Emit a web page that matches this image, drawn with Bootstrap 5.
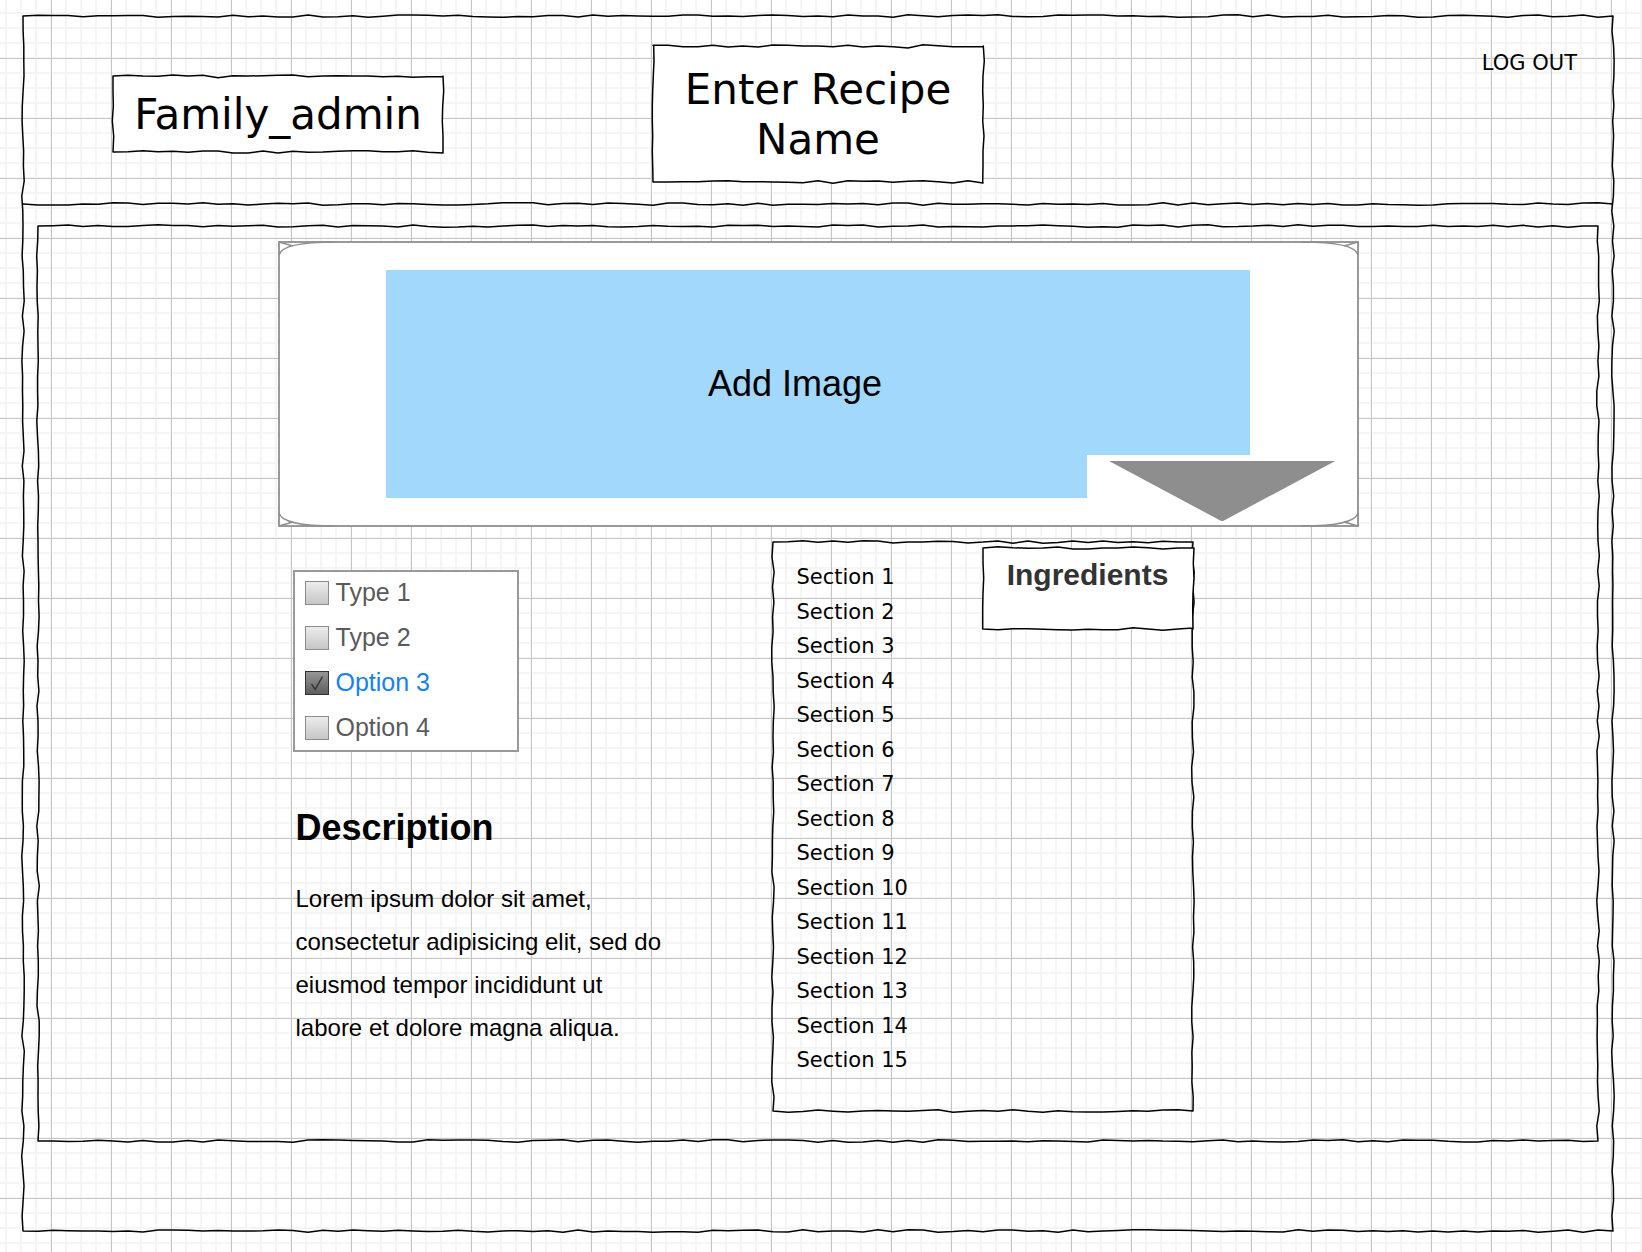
<!DOCTYPE html>
<html lang="en">
<head>
<meta charset="utf-8">
<meta name="viewport" content="width=device-width, initial-scale=1">
<title>Enter Recipe</title>
<link href="https://cdn.jsdelivr.net/npm/bootstrap@5.3.0/dist/css/bootstrap.min.css" rel="stylesheet">
<style>
  body {
    color: #000;
    font-family: Verdana, "DejaVu Sans", sans-serif;
    font-size: 21px;
    line-height: 25px;
    background-color: #fff;
    background-image:
      linear-gradient(90deg, #c6c6c6 1px, transparent 1px),
      linear-gradient(#c6c6c6 1px, transparent 1px),
      linear-gradient(90deg, #f5f5f5 2px, transparent 2px),
      linear-gradient(#f5f5f5 2px, transparent 2px);
    background-size: 60px 60px, 60px 60px, 15px 15px, 15px 15px;
    background-position: 51px 0, 0 58px, 5px 0, 0 12px;
  }
  .arial { font-family: Arial, "Liberation Sans", sans-serif; }
  .page-wrap { padding: 16px 29px 20px 23px; }

  /* hand-drawn outlines */
  .sketch { position: relative; isolation: isolate; }
  .sketch > .outline { position: absolute; inset: 0; width: 100%; height: 100%; overflow: visible; z-index: -1; pointer-events: none; }
  .outline path { fill: none; stroke: #000; stroke-width: 1.5; stroke-linejoin: round; }
  .filled > .outline path { fill: #fff; }

  .topbar { padding: 30px 0 22px; }
  .title-box { width: 330px; font-size: 42px; line-height: 50px; text-align: center; }
  .user-box { margin-left: 90px; padding: 14px 0 12px; }
  .recipe-box { padding: 19px 16px 17px; }
  .logout { margin-right: 36px; margin-top: 5px; }

  .page-frame { padding-bottom: 90px; }
  .content-frame { margin: 22px 15px 0; padding: 15px 15px 30px; }
  .content-col { max-width: 1081px; }

  .picture { height: 286px; padding: 29px 10%; background: #fff; }
  .corner { position: absolute; width: 64px; height: 14px; overflow: visible; }
  .corner path { fill: none; stroke: #8e8e8e; stroke-width: 1.5; }
  .picture-edge { position: absolute; inset: 0; border: 2px solid #999; pointer-events: none; }
  .corner.tr, .corner.br { right: 1px; }
  .corner.tl, .corner.bl { left: 1px; }
  .corner.tl, .corner.tr { top: 1px; }
  .corner.bl, .corner.br { bottom: 1px; }
  .corner.tr { transform: scaleX(-1); }
  .corner.bl { transform: scaleY(-1); }
  .corner.br { transform: scale(-1); }
  .add-image { background: #a2d8fc; font-size: 36px; line-height: 44px; padding: 0 46px 0 0; color: #000; }
  .dropper { position: absolute; right: 1px; bottom: 1px; width: 25%; height: 25%; background: #fff; padding: 6px 22px 5px; }
  .dropper svg { width: 100%; height: 100%; }

  .side-col { flex: 0 0 495px; padding: 43px 0 0 15px; }
  .types { width: 226px; height: 182px; background: #fff; border: 2px solid #999; padding: 0 10px; font-size: 25px; }
  .types .form-check { height: 45px; padding: 0 0 4px; margin: 0; gap: 7px; }
  .types .form-check-input {
    float: none; margin: 0; width: 24px; height: 24px; border: 1px solid #8c8c8c; border-radius: 0;
    background-image: linear-gradient(#ececec, #c6c6c6); background-size: 100% 100%; box-shadow: none;
  }
  .types .form-check-input:checked {
    border-color: #333;
    background-color: #777;
    background-image: url("data:image/svg+xml,%3Csvg xmlns='http://www.w3.org/2000/svg' viewBox='0 0 24 24'%3E%3Cpath d='M6 13l4 6L18 5' fill='none' stroke='%23333' stroke-width='1.5'/%3E%3C/svg%3E"), linear-gradient(#969696, #5e5e5e);
  }
  .types label { color: #5a5a5a; line-height: 30px; padding-bottom: 2px; }
  .types input:checked + label { color: #1580f8; }
  .story { padding: 54px 0 0 3px; max-width: 380px; }
  .story h2 { font-size: 36px; line-height: 43px; margin-bottom: 28px; font-weight: 700; }
  .story p { font-size: 24px; line-height: 43px; margin: 0; }

  .panel { flex: 0 0 420px; margin-top: 15px; height: 569px; }
  .panel ul { margin: 23px 0 38px 24px; }
  .panel-head { width: 210px; height: 81px; margin-top: 6px; padding-top: 9px; font-size: 30px; line-height: 36px; color: #333; }
</style>
</head>
<body>
<div class="page-wrap">
  <div class="page-frame sketch" data-seed="7">
    <header class="topbar sketch d-flex align-items-center" data-seed="21" data-sides="bottom">
      <div class="col">
        <div class="title-box user-box sketch filled"
             data-top="0 -2 0 1 -3 0 -2 5 -1 0 -1 -2 -3 2 0 -1 0 0 2 1 4 2 2"
             data-bottom="0 -1 -4 -1 -2 1 -3 -3 3 3 -3 3 -2 1 0 -2 -4 -4 -1 -1 -4 1 3"
             data-left="0 0 1 -2 2 0" data-right="0 2 -1 -2 0 0">Family_admin</div>
      </div>
      <h1 class="title-box recipe-box sketch filled fw-normal mb-0"
          data-top="-2 -2 2 2 -2 3 0 3 -3 -2 0 0 2 -2 3 0 2 6 -4 -1 2 2 2"
          data-bottom="0 0 -1 -1 -3 -4 -1 -1 0 1 2 -4 4 -4 -2 -3 1 -2 -4 -1 3 -4 3"
          data-left="2 3 1 -1 -2 -2 -1 -2 -1 0" data-right="1 4 0 -1 1 -1 3 0 0 -1">Enter Recipe Name</h1>
      <nav class="col text-end align-self-start" aria-label="Account">
        <a class="logout d-inline-block text-black text-decoration-none" href="#">LOG OUT</a>
      </nav>
    </header>

    <main class="content-frame sketch" data-seed="35">
      <div class="content-col mx-auto">
        <section class="picture position-relative" aria-label="Recipe image">
          <button class="add-image arial border-0 w-100 h-100" type="button">Add Image</button>
          <button class="dropper border-0 d-block" type="button" aria-label="Choose image">
            <svg class="d-block" viewBox="0 0 226 60" preserveAspectRatio="none" aria-hidden="true"><path d="M0 0H226L113 60Z" fill="#8e8e8e"/></svg>
          </button>
          <div class="picture-edge"></div>
          <svg class="corner tl" aria-hidden="true"><path d="M0 13C2 5 20 0 56 0M0 0L14 4"/></svg>
          <svg class="corner tr" aria-hidden="true"><path d="M0 13C2 5 20 0 56 0M0 0L14 4"/></svg>
          <svg class="corner bl" aria-hidden="true"><path d="M0 13C2 5 20 0 56 0M0 0L14 4"/></svg>
          <svg class="corner br" aria-hidden="true"><path d="M0 13C2 5 20 0 56 0M0 0L14 4"/></svg>
        </section>

        <div class="d-flex">
          <div class="side-col arial">
            <form class="types">
              <div class="form-check d-flex align-items-center"><input class="form-check-input" type="checkbox" id="t1"><label for="t1">Type 1</label></div>
              <div class="form-check d-flex align-items-center"><input class="form-check-input" type="checkbox" id="t2"><label for="t2">Type 2</label></div>
              <div class="form-check d-flex align-items-center"><input class="form-check-input" type="checkbox" id="t3" checked><label for="t3">Option 3</label></div>
              <div class="form-check d-flex align-items-center"><input class="form-check-input" type="checkbox" id="t4"><label for="t4">Option 4</label></div>
            </form>
            <article class="story">
              <h2>Description</h2>
              <p>Lorem ipsum dolor sit amet, consectetur adipisicing elit, sed do eiusmod tempor incididunt ut labore et dolore magna aliqua.</p>
            </article>
          </div>

          <section class="panel sketch d-flex justify-content-between" data-seed="52">
            <ul class="list-unstyled d-flex flex-column justify-content-between">
              <li>Section 1</li><li>Section 2</li><li>Section 3</li><li>Section 4</li><li>Section 5</li>
              <li>Section 6</li><li>Section 7</li><li>Section 8</li><li>Section 9</li><li>Section 10</li>
              <li>Section 11</li><li>Section 12</li><li>Section 13</li><li>Section 14</li><li>Section 15</li>
            </ul>
            <h2 class="panel-head sketch filled arial fw-bold text-center mb-0"
                data-top="0 -4 -1 1 0 -3 3 3 0 0 -3 -1 3 0 0"
                data-bottom="0 2 -1 -1 1 2 3 1 2 2 -4 0 4 0 -3"
                data-left="0 0 2 0 -1 -1" data-right="3 1 3 0 -1 0">Ingredients</h2>
          </section>
        </div>
      </div>
    </main>
  </div>
</div>

<script src="https://cdn.jsdelivr.net/npm/bootstrap@5.3.0/dist/js/bootstrap.bundle.min.js"></script>
<script>
  // Draws a wobbly outline round every .sketch box, a vertex every 15px.
  // Offsets come from data-top/right/bottom/left (thirds of a pixel) or a seeded generator.
  const STEP = 15;
  function generator(seed) {
    let s = seed * 7919 + 13;
    return () => { s = (s * 16807) % 2147483647; return s / 2147483647; };
  }
  function wobble(box, side, length, rand) {
    const given = box.dataset[side] ? box.dataset[side].split(" ").map(Number) : null;
    const count = Math.max(1, Math.round(length / STEP));
    const points = [];
    for (let i = 0; i <= count; i++) {
      const along = i === count ? length : i * STEP;
      let off = given ? (given[i] || 0) / 3 : (rand() - 0.5) * 2.6;
      if (!given && (i === 0 || i === count)) off = 0;
      points.push([along, off]);
    }
    return points;
  }
  function draw(box) {
    let svg = box.querySelector(":scope > .outline");
    if (!svg) {
      svg = document.createElementNS("http://www.w3.org/2000/svg", "svg");
      svg.setAttribute("class", "outline");
      svg.setAttribute("aria-hidden", "true");
      svg.appendChild(document.createElementNS(svg.namespaceURI, "path"));
      box.prepend(svg);
    }
    const w = box.offsetWidth, h = box.offsetHeight;
    const rand = generator(Number(box.dataset.seed || 1));
    const top = wobble(box, "top", w, rand), right = wobble(box, "right", h, rand);
    const bottom = wobble(box, "bottom", w, rand), left = wobble(box, "left", h, rand);
    const line = pts => "M" + pts.map(p => p.map(n => n.toFixed(1)).join(" ")).join("L");
    const low = bottom.map(([a, o]) => [a, h + o]);
    svg.firstChild.setAttribute("d", box.dataset.sides === "bottom" ? line(low) : line([
      ...top.map(([a, o]) => [a, o]),
      ...right.map(([a, o]) => [w + o, a]),
      ...low.reverse(),
      ...left.map(([a, o]) => [o, a]).reverse()
    ]) + "Z");
  }
  const observer = new ResizeObserver(entries => entries.forEach(e => draw(e.target)));
  document.querySelectorAll(".sketch").forEach(box => { draw(box); observer.observe(box); });
</script>
</body>
</html>
